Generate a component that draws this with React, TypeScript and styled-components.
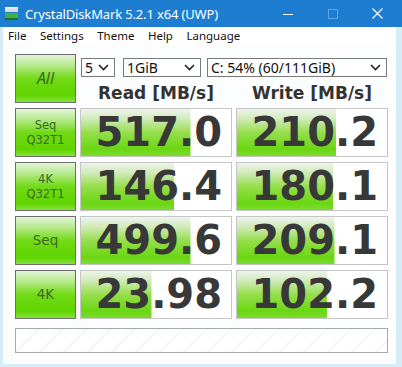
import React from "react";
import styled, { createGlobalStyle } from "styled-components";

const GlobalStyle = createGlobalStyle`
  html, body {
    margin: 0;
    padding: 0;
    background: #d6edf8;
  }
`;

const Window = styled.div`
  width: 402px;
  height: 367px;
  display: flex;
  flex-direction: column;
  background: #d6edf8;
  overflow: hidden;
  font-family: "Noto Sans", "DejaVu Sans", sans-serif;
`;

const TitleBar = styled.div`
  height: 27px;
  flex: none;
  display: flex;
  align-items: center;
  background: #1c7dd1;
  color: #fff;
  font-size: 13px;
  padding-left: 4px;

  .title {
    margin-left: 6px;
    flex: 1;
    letter-spacing: -0.15px;
  }
`;

const Controls = styled.div`
  display: flex;
  align-items: center;
  height: 100%;
  padding-right: 2px;
`;

const ControlButton = styled.div`
  width: 45px;
  height: 100%;
  display: flex;
  align-items: center;
  justify-content: center;
`;

const Frame = styled.div`
  flex: 1;
  display: flex;
  flex-direction: column;
  padding: 0 6px 3px 3px;
`;

const MenuBar = styled.div`
  height: 18px;
  flex: none;
  display: flex;
  align-items: center;
  gap: 13.5px;
  background: #fff;
  padding-left: 5px;
  font-size: 11.5px;
  color: #111;
`;

const MenuItem = styled.span`
  line-height: 18px;
`;

const Content = styled.div`
  flex: 1;
  background: #fbfdfe;
  padding: 9px 8px 7px 12px;
  display: grid;
  grid-template-columns: 61px 152px 152px;
  grid-template-rows: 49px repeat(4, 49px) 29px;
  column-gap: 4px;
  row-gap: 5px;
`;

const LabelButton = styled.div<{ $big?: boolean; $italic?: boolean }>`
  box-sizing: border-box;
  border: 1px solid #6e6e6e;
  background: linear-gradient(
    to bottom,
    #e4f4da 0%,
    #b6e98c 22%,
    #72da16 50%,
    #5fd400 86%,
    #86e23a 100%
  );
  color: #3a6a28;
  display: flex;
  flex-direction: column;
  align-items: center;
  justify-content: center;
  font-family: ${(p) =>
    p.$italic ? `"Noto Sans", sans-serif` : `"DejaVu Sans", sans-serif`};
  font-size: ${(p) => (p.$italic ? "16px" : p.$big ? "13.5px" : "11.5px")};
  font-style: ${(p) => (p.$italic ? "italic" : "normal")};
  line-height: 15px;
`;

const TopControls = styled.div`
  grid-column: 2 / 4;
  display: flex;
  flex-direction: column;
  padding-top: 4px;
`;

const SelectRow = styled.div`
  display: flex;
  padding-left: 1px;
`;

const Select = styled.div<{ $width: number; $gap: number }>`
  box-sizing: border-box;
  width: ${(p) => p.$width}px;
  margin-right: ${(p) => p.$gap}px;
  height: 19px;
  border: 1px solid #7a7a7a;
  background: #fff;
  display: flex;
  align-items: center;
  justify-content: space-between;
  padding: 0 5px 0 3px;
  font-size: 14px;
  color: #111;
  line-height: 17px;
`;

const Headers = styled.div`
  display: grid;
  grid-template-columns: 152px 152px;
  column-gap: 4px;
  margin-top: 6px;
`;

const Header = styled.div`
  text-align: center;
  font-family: "DejaVu Sans", sans-serif;
  font-weight: bold;
  font-size: 17px;
  line-height: 20px;
  color: #333;
`;

const ValueBox = styled.div`
  box-sizing: border-box;
  border: 1px solid #c6c6c6;
  background-color: #fff;
  background-image: linear-gradient(
    to bottom,
    #eef3ec 0%,
    #d2ebbc 20%,
    #96de4c 50%,
    #6ad612 85%,
    #7cdc2c 100%
  );
  background-repeat: no-repeat;
  display: flex;
  align-items: center;
  justify-content: flex-end;
  padding-right: 9px;
  font-family: "DejaVu Sans", sans-serif;
  font-weight: bold;
  font-size: 40px;
  color: #383838;
  line-height: 47px;
`;

const Comment = styled.div`
  grid-column: 1 / 4;
  margin-top: 4px;
  box-sizing: border-box;
  border: 1px solid #a9a9a9;
  background: repeating-linear-gradient(
    135deg,
    #ffffff 0px,
    #ffffff 14px,
    #f7f7f7 15px,
    #f7f7f7 17px
  );
`;

const Chevron = () => (
  <svg width="11" height="7" viewBox="0 0 11 7">
    <polyline
      points="1,1 5.5,5.5 10,1"
      fill="none"
      stroke="#222"
      strokeWidth="1.6"
    />
  </svg>
);

const AppIcon = () => (
  <svg width="15" height="15" viewBox="0 0 15 15">
    <rect x="1" y="1" width="13" height="5" fill="#d6dde4" />
    <rect x="1" y="1" width="13" height="1.5" fill="#f2f4f6" />
    <rect x="1" y="7" width="13" height="6" fill="#3cb23f" />
    <rect x="1" y="12" width="13" height="2" fill="#1f6f2a" />
  </svg>
);

const rows = [
  { label: ["Seq", "Q32T1"], read: "517.0", rp: 73, write: "210.2", wp: 66 },
  { label: ["4K", "Q32T1"], read: "146.4", rp: 62, write: "180.1", wp: 64 },
  { label: ["Seq"], read: "499.6", rp: 73, write: "209.1", wp: 65 },
  { label: ["4K"], read: "23.98", rp: 47, write: "102.2", wp: 60 },
];

const App = () => {
  return (
    <>
      <GlobalStyle />
      <Window>
        <TitleBar>
          <AppIcon />
          <span className="title">CrystalDiskMark 5.2.1 x64 (UWP)</span>
          <Controls>
            <ControlButton>
              <svg width="10" height="10" viewBox="0 0 10 10">
                <line x1="0" y1="5.5" x2="10" y2="5.5" stroke="#fff" />
              </svg>
            </ControlButton>
            <ControlButton>
              <svg width="10" height="10" viewBox="0 0 10 10">
                <rect
                  x="0.5"
                  y="0.5"
                  width="9"
                  height="9"
                  fill="none"
                  stroke="#5da6e4"
                />
              </svg>
            </ControlButton>
            <ControlButton>
              <svg width="11" height="11" viewBox="0 0 11 11">
                <path
                  d="M0.5 0.5 L10.5 10.5 M10.5 0.5 L0.5 10.5"
                  stroke="#fff"
                  strokeWidth="1.1"
                />
              </svg>
            </ControlButton>
          </Controls>
        </TitleBar>

        <Frame>
          <MenuBar>
            <MenuItem>File</MenuItem>
            <MenuItem>Settings</MenuItem>
            <MenuItem>Theme</MenuItem>
            <MenuItem>Help</MenuItem>
            <MenuItem>Language</MenuItem>
          </MenuBar>

          <Content>
            <LabelButton $big $italic>
              All
            </LabelButton>
            <TopControls>
              <SelectRow>
                <Select $width={34} $gap={8}>
                  <span>5</span>
                  <Chevron />
                </Select>
                <Select $width={78} $gap={6}>
                  <span>1GiB</span>
                  <Chevron />
                </Select>
                <Select $width={180} $gap={0}>
                  <span>C: 54% (60/111GiB)</span>
                  <Chevron />
                </Select>
              </SelectRow>
              <Headers>
                <Header>Read [MB/s]</Header>
                <Header>Write [MB/s]</Header>
              </Headers>
            </TopControls>

            {rows.map((row) => (
              <React.Fragment key={row.read}>
                <LabelButton $big={row.label.length === 1}>
                  {row.label.map((l) => (
                    <span key={l}>{l}</span>
                  ))}
                </LabelButton>
                <ValueBox style={{ backgroundSize: `${row.rp}% 100%` }}>
                  {row.read}
                </ValueBox>
                <ValueBox style={{ backgroundSize: `${row.wp}% 100%` }}>
                  {row.write}
                </ValueBox>
              </React.Fragment>
            ))}

            <Comment />
          </Content>
        </Frame>
      </Window>
    </>
  );
};

export default App;
